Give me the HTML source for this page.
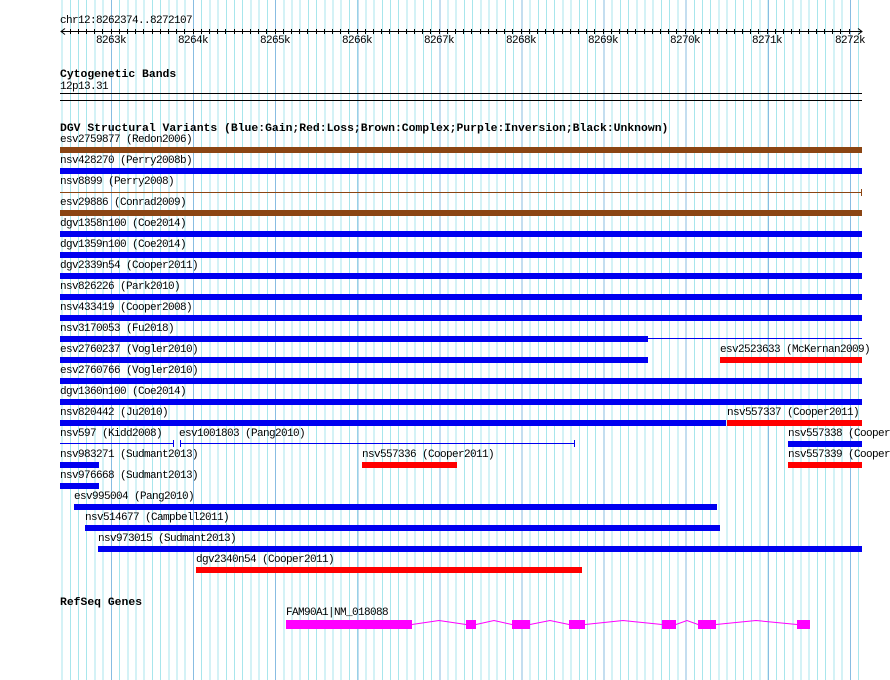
<!DOCTYPE html>
<html><head><meta charset="utf-8">
<style>
*{margin:0;padding:0;box-sizing:border-box}
body{width:890px;height:680px;background:#fff;position:relative;overflow:hidden;font-family:"Liberation Mono",monospace;font-size:11px;color:#000}
.grid{position:absolute;left:60px;top:0;width:801px;height:680px;
background-image:repeating-linear-gradient(to right,transparent 0,transparent 51px,#88bde2 51px,#88bde2 52px,transparent 52px,transparent 82.1px),
repeating-linear-gradient(to right,transparent 0,transparent 1.6px,#a8e6ec 1.6px,#a8e6ec 2.6px,transparent 2.6px,transparent 8.21px);}
.t{position:absolute;line-height:11px;white-space:pre;letter-spacing:-0.6px}
.b{position:absolute;font-weight:bold;font-size:11.4px;line-height:12px;white-space:pre}
.bar{position:absolute;height:6px}
.ln{position:absolute;height:1px}
.B{background:#0000f0}.R{background:#f00}.N{background:#8b4513}
.tk{position:absolute;width:1px;height:7px}
</style></head><body>
<div class="grid"></div>

<div class="t" style="left:60px;top:16px">chr12:8262374..8272107</div>
<svg style="position:absolute;left:0;top:0" width="890" height="60">
<line x1="61" y1="31.5" x2="862" y2="31.5" stroke="#000"/>
<polyline points="65,28.5 61,31.5 65,34.5" fill="none" stroke="#000"/>
<polyline points="858,28.5 862,31.5 858,34.5" fill="none" stroke="#000"/>
<g stroke="#000">
<path d="M70.5 29v5M78.5 29v5M86.5 29v5M94.5 29v5M102.5 29v5M111.5 29v5M119.5 29v5M127.5 29v5M135.5 29v5M143.5 29v5M152.5 29v5M160.5 29v5M168.5 29v5M176.5 29v5M184.5 29v5M193.5 29v5M201.5 29v5M209.5 29v5M217.5 29v5M225.5 29v5M234.5 29v5M242.5 29v5M250.5 29v5M258.5 29v5M266.5 29v5M275.5 29v5M283.5 29v5M291.5 29v5M299.5 29v5M307.5 29v5M316.5 29v5M324.5 29v5M332.5 29v5M340.5 29v5M348.5 29v5M357.5 29v5M365.5 29v5M373.5 29v5M381.5 29v5M389.5 29v5M398.5 29v5M406.5 29v5M414.5 29v5M422.5 29v5M430.5 29v5M439.5 29v5M447.5 29v5M455.5 29v5M463.5 29v5M471.5 29v5M480.5 29v5M488.5 29v5M496.5 29v5M504.5 29v5M512.5 29v5M521.5 29v5M529.5 29v5M537.5 29v5M545.5 29v5M553.5 29v5M562.5 29v5M570.5 29v5M578.5 29v5M586.5 29v5M594.5 29v5M603.5 29v5M611.5 29v5M619.5 29v5M627.5 29v5M635.5 29v5M644.5 29v5M652.5 29v5M660.5 29v5M668.5 29v5M676.5 29v5M685.5 29v5M693.5 29v5M701.5 29v5M709.5 29v5M717.5 29v5M726.5 29v5M734.5 29v5M742.5 29v5M750.5 29v5M758.5 29v5M767.5 29v5M775.5 29v5M783.5 29v5M791.5 29v5M799.5 29v5M808.5 29v5M816.5 29v5M824.5 29v5M832.5 29v5M840.5 29v5M849.5 29v5"/>
</g>
</svg>
<div class="t" style="left:96px;top:36px">8263k</div>
<div class="t" style="left:178px;top:36px">8264k</div>
<div class="t" style="left:260px;top:36px">8265k</div>
<div class="t" style="left:342px;top:36px">8266k</div>
<div class="t" style="left:424px;top:36px">8267k</div>
<div class="t" style="left:506px;top:36px">8268k</div>
<div class="t" style="left:588px;top:36px">8269k</div>
<div class="t" style="left:670px;top:36px">8270k</div>
<div class="t" style="left:752px;top:36px">8271k</div>
<div class="t" style="left:835px;top:36px">8272k</div>

<div class="b" style="left:60px;top:69px">Cytogenetic Bands</div>
<div class="t" style="left:60px;top:82px">12p13.31</div>
<div class="ln" style="left:60px;top:93px;width:802px;background:#000"></div>
<div class="ln" style="left:60px;top:100px;width:802px;background:#000"></div>

<div class="b" style="left:60px;top:123px">DGV Structural Variants (Blue:Gain;Red:Loss;Brown:Complex;Purple:Inversion;Black:Unknown)</div>

<div class="t" style="left:60px;top:135px">esv2759877 (Redon2006)</div>
<div class="bar N" style="left:60px;top:147px;width:802px"></div>
<div class="t" style="left:60px;top:156px">nsv428270 (Perry2008b)</div>
<div class="bar B" style="left:60px;top:168px;width:802px"></div>
<div class="t" style="left:60px;top:177px">nsv8899 (Perry2008)</div>
<div class="ln N" style="left:60px;top:192px;width:802px"></div>
<div class="tk N" style="left:861px;top:189px"></div>
<div class="t" style="left:60px;top:198px">esv29886 (Conrad2009)</div>
<div class="bar N" style="left:60px;top:210px;width:802px"></div>
<div class="t" style="left:60px;top:219px">dgv1358n100 (Coe2014)</div>
<div class="bar B" style="left:60px;top:231px;width:802px"></div>
<div class="t" style="left:60px;top:240px">dgv1359n100 (Coe2014)</div>
<div class="bar B" style="left:60px;top:252px;width:802px"></div>
<div class="t" style="left:60px;top:261px">dgv2339n54 (Cooper2011)</div>
<div class="bar B" style="left:60px;top:273px;width:802px"></div>
<div class="t" style="left:60px;top:282px">nsv826226 (Park2010)</div>
<div class="bar B" style="left:60px;top:294px;width:802px"></div>
<div class="t" style="left:60px;top:303px">nsv433419 (Cooper2008)</div>
<div class="bar B" style="left:60px;top:315px;width:802px"></div>
<div class="t" style="left:60px;top:324px">nsv3170053 (Fu2018)</div>
<div class="bar B" style="left:60px;top:336px;width:588px"></div>
<div class="ln B" style="left:648px;top:338px;width:214px"></div>
<div class="t" style="left:60px;top:345px">esv2760237 (Vogler2010)</div>
<div class="bar B" style="left:60px;top:357px;width:588px"></div>
<div class="t" style="left:720px;top:345px">esv2523633 (McKernan2009)</div>
<div class="bar R" style="left:720px;top:357px;width:142px"></div>
<div class="t" style="left:60px;top:366px">esv2760766 (Vogler2010)</div>
<div class="bar B" style="left:60px;top:378px;width:802px"></div>
<div class="t" style="left:60px;top:387px">dgv1360n100 (Coe2014)</div>
<div class="bar B" style="left:60px;top:399px;width:802px"></div>
<div class="t" style="left:60px;top:408px">nsv820442 (Ju2010)</div>
<div class="bar B" style="left:60px;top:420px;width:666px"></div>
<div class="t" style="left:727px;top:408px">nsv557337 (Cooper2011)</div>
<div class="bar R" style="left:727px;top:420px;width:135px"></div>
<div class="t" style="left:60px;top:429px">nsv597 (Kidd2008)</div>
<div class="ln B" style="left:60px;top:443px;width:114px"></div>
<div class="tk B" style="left:173px;top:440px"></div>
<div class="t" style="left:179px;top:429px">esv1001803 (Pang2010)</div>
<div class="ln B" style="left:180px;top:443px;width:395px"></div>
<div class="tk B" style="left:180px;top:440px"></div>
<div class="tk B" style="left:574px;top:440px"></div>
<div class="t" style="left:788px;top:429px">nsv557338 (Cooper</div>
<div class="bar B" style="left:788px;top:441px;width:74px"></div>
<div class="t" style="left:60px;top:450px">nsv983271 (Sudmant2013)</div>
<div class="bar B" style="left:60px;top:462px;width:39px"></div>
<div class="t" style="left:362px;top:450px">nsv557336 (Cooper2011)</div>
<div class="bar R" style="left:362px;top:462px;width:95px"></div>
<div class="t" style="left:788px;top:450px">nsv557339 (Cooper</div>
<div class="bar R" style="left:788px;top:462px;width:74px"></div>
<div class="t" style="left:60px;top:471px">nsv976668 (Sudmant2013)</div>
<div class="bar B" style="left:60px;top:483px;width:39px"></div>
<div class="t" style="left:74px;top:492px">esv995004 (Pang2010)</div>
<div class="bar B" style="left:74px;top:504px;width:643px"></div>
<div class="t" style="left:85px;top:513px">nsv514677 (Campbell2011)</div>
<div class="bar B" style="left:85px;top:525px;width:635px"></div>
<div class="t" style="left:98px;top:534px">nsv973015 (Sudmant2013)</div>
<div class="bar B" style="left:98px;top:546px;width:764px"></div>
<div class="t" style="left:196px;top:555px">dgv2340n54 (Cooper2011)</div>
<div class="bar R" style="left:196px;top:567px;width:386px"></div>

<div class="b" style="left:60px;top:597px">RefSeq Genes</div>
<div class="t" style="left:286px;top:608px">FAM90A1|NM_018088</div>
<svg style="position:absolute;left:0;top:0" width="890" height="680">
<polyline fill="none" stroke="#f0f" stroke-width="1" points="412,624.5 439,620.5 466,624.5 476,624.5 494,620.5 512,624.5 530,624.5 550,620.5 569,624.5 585,624.5 623,620.5 662,624.5 676,624.5 687,620.5 698,624.5 716,624.5 756,620.5 797,624.5"/>
<g fill="#f0f">
<rect x="286" y="620" width="126" height="9"/>
<rect x="466" y="620" width="10" height="9"/>
<rect x="512" y="620" width="18" height="9"/>
<rect x="569" y="620" width="16" height="9"/>
<rect x="662" y="620" width="14" height="9"/>
<rect x="698" y="620" width="18" height="9"/>
<rect x="797" y="620" width="13" height="9"/>
</g>
</svg>
</body></html>
